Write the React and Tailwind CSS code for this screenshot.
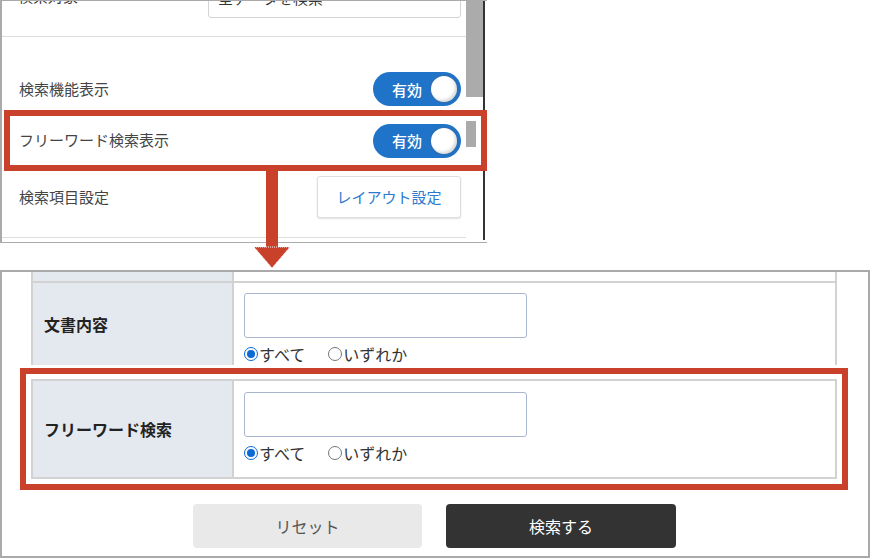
import React from "react";

const RED = "border-[#c9412b]";

function Toggle() {
  return (
    <div className="w-[88px] h-[34px] rounded-full bg-[#1f74c9] flex items-center pl-[19px] pr-[2px] shrink-0">
      <span className="text-white text-[15px] leading-none font-medium">有効</span>
      <div className="ml-auto w-[30px] h-[30px] rounded-full bg-white border-2 border-[#2a6fb8] shadow-[inset_-2px_-2px_3px_rgba(0,0,0,0.15)]" />
    </div>
  );
}

function Radio({ checked, label }) {
  return (
    <div className="flex items-center">
      {checked ? (
        <div className="w-[14px] h-[14px] rounded-full border-[1.5px] border-[#0a6ad6] flex items-center justify-center bg-white">
          <div className="w-[8px] h-[8px] rounded-full bg-[#0a6ad6]" />
        </div>
      ) : (
        <div className="w-[14px] h-[14px] rounded-full border border-[#777] bg-white" />
      )}
      <span className="ml-[1px] text-[16px] leading-[20px] text-[#333]">{label}</span>
    </div>
  );
}

function ValueCell({ pt }) {
  return (
    <div className={`flex-1 flex flex-col pl-[10px] ${pt}`}>
      <div className="w-[283px] h-[45px] border border-[#aab5d0] rounded-[3px] bg-white" />
      <div className="flex items-center gap-[23px] mt-[6px] h-[20px]">
        <Radio checked label="すべて" />
        <Radio label="いずれか" />
      </div>
    </div>
  );
}

export default function App() {
  return (
    <div className="relative w-[870px] h-[558px] overflow-hidden bg-white font-['Noto_Sans_CJK_JP','Noto_Sans',sans-serif]">
      {/* Top settings panel */}
      <div className="w-[487px] h-[243px] border-t border-l-2 border-b border-[#aaa] flex flex-col">
        {/* rows 1-2 */}
        <div className="flex h-[109px] shrink-0">
          <div className="w-[464px] flex flex-col">
            <div className="h-[36px] border-b border-[#ddd] flex items-start overflow-hidden">
              <span className="ml-[16px] -mt-[16px] text-[15px] leading-[22px] text-[#333]">検索対象</span>
              <div className="ml-auto mr-[5px] w-[253px] h-[40px] -mt-[23px] border border-[#d4d4d4] rounded-[3px] bg-white flex items-center pl-[9px] shrink-0">
                <span className="text-[15px] leading-[22px] text-[#333]">全データを検索</span>
              </div>
            </div>
            <div className="flex items-center h-[34px] mt-[35px]">
              <span className="ml-[17px] text-[15px] text-[#444]">検索機能表示</span>
              <div className="ml-auto mr-[5px]">
                <Toggle />
              </div>
            </div>
          </div>
          <div className="w-[17px] flex flex-col">
            <div className="h-[96px] bg-[#ababab]" />
          </div>
          <div className="w-[2px] bg-[#333]" />
          <div className="w-[2px]" />
        </div>

        {/* highlighted row */}
        <div className={`ml-[2px] w-[483px] h-[61px] shrink-0 border-[6px] ${RED} flex items-center pl-[9px] bg-white`}>
          <span className="text-[15px] text-[#444]">フリーワード検索表示</span>
          <div className="ml-auto">
            <Toggle />
          </div>
          <div className="self-start mt-[5px] ml-[5px] mr-[5px] w-[10px] h-[26px] bg-[#aaa]" />
        </div>

        {/* row 4 */}
        <div className="flex flex-1">
          <div className="w-[464px] flex flex-col">
            <div className="h-[67px] border-b border-[#ddd] flex items-start pt-[5px]">
              <div className="h-[42px] flex items-center ml-[17px]">
                <span className="text-[15px] text-[#444]">検索項目設定</span>
              </div>
              <div className="ml-auto mr-[5px] w-[144px] h-[42px] border border-[#ddd] rounded-[3px] bg-white shadow-[0_1px_2px_rgba(0,0,0,0.12)] flex items-center justify-center">
                <span className="text-[15px] text-[#2c7bd0]">レイアウト設定</span>
              </div>
            </div>
          </div>
          <div className="w-[17px]" />
          <div className="w-[2px] flex flex-col">
            <div className="h-[69px] bg-[#333]" />
          </div>
          <div className="w-[2px]" />
        </div>
      </div>

      {/* Bottom search form panel */}
      <div className="mt-[27px] w-[870px] h-[288px] border-2 border-[#aaa] flex flex-col">
        <div className="ml-[29px] w-[806px] border-x-2 border-[#d2d2d2] flex flex-col">
          <div className="h-[9px] flex">
            <div className="w-[199px] bg-[#e4e8ef]" />
            <div className="flex-1 border-l-2 border-[#d2d2d2]" />
          </div>
          <div className="h-[84px] border-t-2 border-[#d2d2d2] flex">
            <div className="w-[199px] bg-[#e4e8ef] flex items-center pl-[11px]">
              <span className="text-[16px] font-bold text-[#222]">文書内容</span>
            </div>
            <div className="border-l-2 border-[#d2d2d2]" />
            <ValueCell pt="pt-[10px]" />
          </div>
        </div>

        <div className={`mt-[3px] ml-[18px] w-[828px] h-[122px] border-[6px] ${RED} p-[5px] bg-white`}>
          <div className="h-full border-2 border-[#d2d2d2] flex">
            <div className="w-[199px] bg-[#e4e8ef] flex items-center pl-[11px]">
              <span className="text-[16px] font-bold text-[#222]">フリーワード検索</span>
            </div>
            <div className="border-l-2 border-[#d2d2d2]" />
            <ValueCell pt="pt-[11px]" />
          </div>
        </div>

        <div className="mt-[14px] ml-[191px] flex gap-[24px]">
          <div className="w-[229px] h-[44px] rounded-[4px] bg-[#e9e9e9] flex items-center justify-center">
            <span className="text-[16px] text-[#555]">リセット</span>
          </div>
          <div className="w-[230px] h-[44px] rounded-[4px] bg-[#333] flex items-center justify-center">
            <span className="text-[16px] text-white">検索する</span>
          </div>
        </div>
      </div>

      {/* Arrow annotation */}
      <div className="absolute left-[266px] top-[171px] w-[12px] h-[78px] bg-[#c9412b]" />
      <svg className="absolute left-[253px] top-[246px]" width="38" height="24" viewBox="0 0 38 24">
        <polygon points="1,1 37,1 19,22" fill="#c9412b" stroke="#fff" strokeWidth="1" strokeDasharray="1 1" />
      </svg>
    </div>
  );
}
